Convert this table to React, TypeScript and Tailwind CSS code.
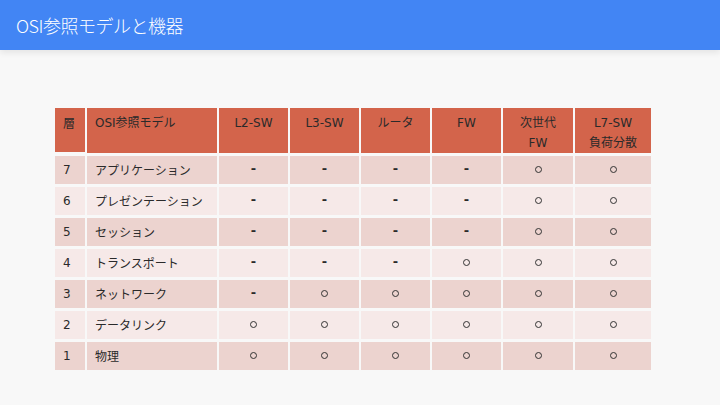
const headers = ["L2-SW", "L3-SW", "ルータ", "FW", "次世代\nFW", "L7-SW\n負荷分散"];

const rows: { layer: number; name: string; marks: string[] }[] = [
  { layer: 7, name: "アプリケーション", marks: ["-", "-", "-", "-", "o", "o"] },
  { layer: 6, name: "プレゼンテーション", marks: ["-", "-", "-", "-", "o", "o"] },
  { layer: 5, name: "セッション", marks: ["-", "-", "-", "-", "o", "o"] },
  { layer: 4, name: "トランスポート", marks: ["-", "-", "-", "o", "o", "o"] },
  { layer: 3, name: "ネットワーク", marks: ["-", "o", "o", "o", "o", "o"] },
  { layer: 2, name: "データリンク", marks: ["o", "o", "o", "o", "o", "o"] },
  { layer: 1, name: "物理", marks: ["o", "o", "o", "o", "o", "o"] },
];

function Mark({ value }: { value: string }) {
  if (value === "o") {
    return <span className="inline-block w-[7px] h-[7px] rounded-full border border-[#333]" />;
  }
  return <span className="text-[13px] font-bold leading-none">-</span>;
}

export default function App() {
  return (
    <div
      className="w-[720px] h-[405px] bg-[#f8f8f8] overflow-hidden"
      style={{ fontFamily: '"DejaVu Sans", "Noto Sans CJK JP", sans-serif' }}
    >
      <div className="relative z-10 h-[50px] bg-[#4285f4] flex items-center px-4 shadow-[0_3px_6px_rgba(0,0,0,0.08)]">
        <h1
          className="text-white text-[18px] font-light tracking-[-0.5px]"
          style={{ fontFamily: '"Noto Sans CJK JP", sans-serif' }}
        >
          OSI参照モデルと機器
        </h1>
      </div>

      <div className="pt-[58px] pl-[55px]">
        <div className="grid grid-cols-[30px_130px_69px_69px_69px_69px_70px_76px] gap-x-[2px] gap-y-[3px] text-[12px] text-[#2a2a2a]">
          <div className="h-[44px] bg-[#d3644b] pl-2 pt-[5px] leading-[20px]" style={{ fontFamily: '"Noto Sans CJK JP", sans-serif' }}>層</div>
          <div className="bg-[#d3644b] pl-2 pt-[5px] leading-[20px]">OSI参照モデル</div>
          {headers.map((h) => (
            <div key={h} className="bg-[#d3644b] pt-[5px] leading-[20px] text-center whitespace-pre-line">
              {h}
            </div>
          ))}

          {rows.map((r, i) => {
            const bg = i % 2 === 0 ? "bg-[#ecd3cf]" : "bg-[#f6e9e8]";
            return (
              <div key={r.layer} className="contents">
                <div className={`h-[28px] ${bg} pl-2 flex items-center`}>{r.layer}</div>
                <div className={`${bg} pl-2 flex items-center`} style={{ fontFamily: '"Noto Sans CJK JP", sans-serif' }}>
                  {r.name}
                </div>
                {r.marks.map((m, j) => (
                  <div key={j} className={`${bg} flex justify-center ${m === "o" ? "items-start pt-[10px]" : "items-start pt-[6px]"}`}>
                    <Mark value={m} />
                  </div>
                ))}
              </div>
            );
          })}
        </div>
      </div>
    </div>
  );
}
